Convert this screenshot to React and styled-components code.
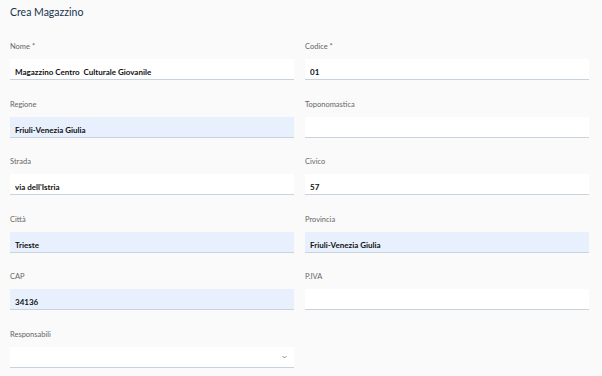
import { createGlobalStyle } from "styled-components";
import styled from "styled-components";

const GlobalStyle = createGlobalStyle`
  body {
    margin: 0;
    background: #fafafa;
    font-family: "Lato", "Liberation Sans", sans-serif;
  }
`

const Page = styled.div`
  padding: 5px 13px 0 10px;
`

const Title = styled.h1`
  margin: 0;
  font-size: 10.5px;
  line-height: 14px;
  font-weight: 400;
  color: #17324d;
`

const FormGrid = styled.div`
  margin-top: 23px;
  display: grid;
  grid-template-columns: 1fr 1fr;
  column-gap: 11px;
  row-gap: 19.6px;
`

const Field = styled.div`
  display: flex;
  flex-direction: column;
`

const Label = styled.label`
  font-size: 7.5px;
  line-height: 10px;
  font-weight: 400;
  color: #666666;
  margin-bottom: 7px;
`

const InputBox = styled.div`
  position: relative;
  height: 20px;
  border-bottom: 1px solid #c9d3dd;
  background: ${(p) => (p.$filled ? "#e8f0fe" : "#ffffff")};
`

const StyledInput = styled.input`
  width: 100%;
  height: 100%;
  box-sizing: border-box;
  border: none;
  outline: none;
  background: transparent;
  padding: 0 5px;
  font-family: "Lato", "Liberation Sans", sans-serif;
  font-size: 8px;
  font-weight: 700;
  color: #111111;
`

const Chevron = styled.svg`
  position: absolute;
  right: 7px;
  top: 8px;
  width: 5px;
  height: 4px;
`

const fields = [
  { label: "Nome *", value: "Magazzino Centro  Culturale Giovanile" },
  { label: "Codice *", value: "01" },
  { label: "Regione", value: "Friuli-Venezia Giulia", filled: true },
  { label: "Toponomastica", value: "" },
  { label: "Strada", value: "via dell'Istria" },
  { label: "Civico", value: "57" },
  { label: "Città", value: "Trieste", filled: true },
  { label: "Provincia", value: "Friuli-Venezia Giulia", filled: true },
  { label: "CAP", value: "34136", filled: true },
  { label: "P.IVA", value: "" },
]

const App = () => {
  return (
    <>
      <GlobalStyle />
      <Page>
        <Title>Crea Magazzino</Title>
        <FormGrid>
          {fields.map((f) => (
            <Field key={f.label}>
              <Label>{f.label}</Label>
              <InputBox $filled={f.filled}>
                <StyledInput type="text" defaultValue={f.value} />
              </InputBox>
            </Field>
          ))}
          <Field>
            <Label>Responsabili</Label>
            <InputBox>
              <Chevron viewBox="0 0 10 6">
                <path d="M1 1l4 4 4-4" fill="none" stroke="#707070" strokeWidth="1.6" />
              </Chevron>
            </InputBox>
          </Field>
        </FormGrid>
      </Page>
    </>
  )
}

export default App
